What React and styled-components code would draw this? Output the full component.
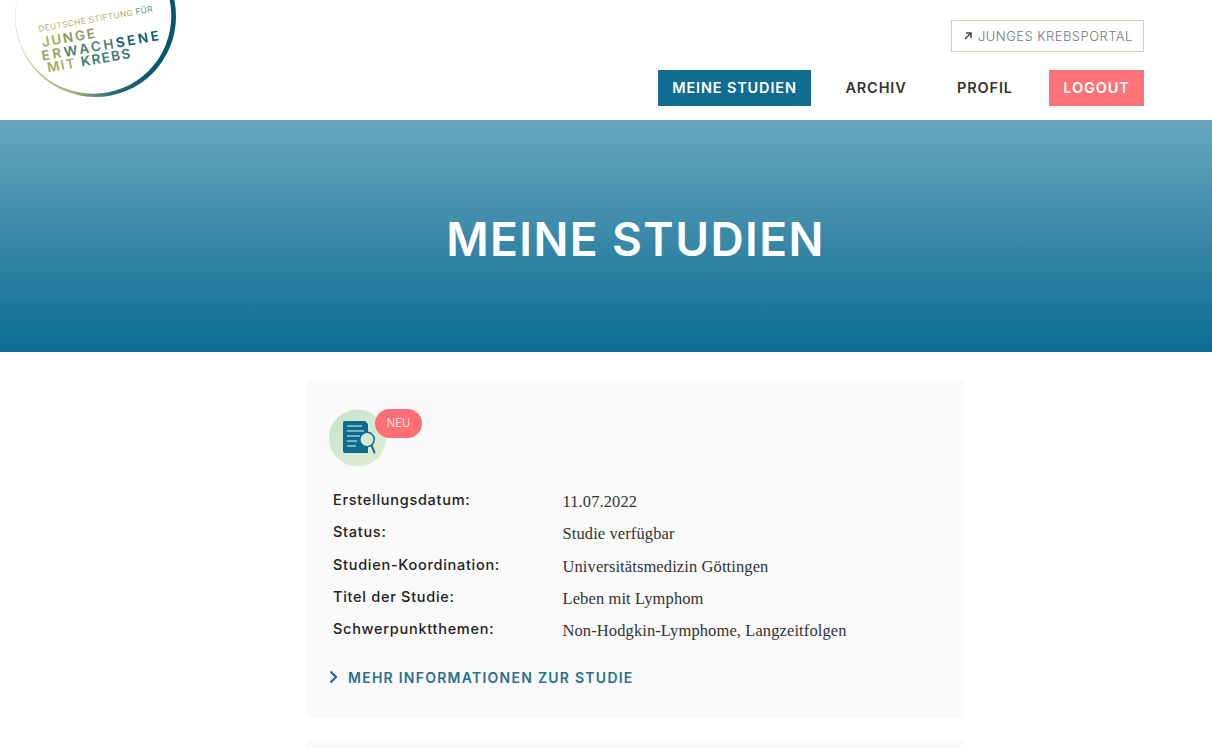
import React from "react";
import styled, { createGlobalStyle } from "styled-components";

const sans = `"Inter", "Open Sans", "Liberation Sans", sans-serif`;
const serif = `"Liberation Serif", "DejaVu Serif", serif`;

const studies = [
  ["Erstellungsdatum:", "11.07.2022"],
  ["Status:", "Studie verfügbar"],
  ["Studien-Koordination:", "Universitätsmedizin Göttingen"],
  ["Titel der Studie:", "Leben mit Lymphom"],
  ["Schwerpunktthemen:", "Non-Hodgkin-Lymphome, Langzeitfolgen"],
];

const GlobalStyle = createGlobalStyle`
  html, body {
    margin: 0;
    height: 748px;
    overflow: hidden;
    background: #fff;
  }
  * { box-sizing: border-box; }
`;

const Header = styled.header`
  height: 120px;
  display: flex;
  justify-content: space-between;
  padding: 0 68px 0 14px;
`;

const LogoWrap = styled.div`
  width: 166px;
  height: 100px;
`;

const HeaderRight = styled.div`
  display: flex;
  flex-direction: column;
  align-items: flex-end;
  padding-top: 20px;
`;

const PortalLink = styled.a`
  height: 32px;
  width: 193px;
  border: 1px solid #c9d3b8;
  display: flex;
  align-items: center;
  gap: 5px;
  padding-left: 11px;
  font: 300 13px ${sans};
  letter-spacing: 0.45px;
  color: #77797b;
  white-space: nowrap;
`;

const Nav = styled.nav`
  display: flex;
  margin-top: 18px;
`;

const NavItem = styled.a`
  height: 36px;
  width: ${(p) => p.$w}px;
  margin-left: ${(p) => p.$ml}px;
  padding-bottom: 2px;
  display: flex;
  align-items: center;
  justify-content: center;
  font: 600 14.5px ${sans};
  letter-spacing: 0.85px;
  white-space: nowrap;
  color: ${(p) => (p.$bg ? "#fff" : "#333")};
  background: ${(p) => p.$bg || "transparent"};
`;

const Hero = styled.section`
  height: 232px;
  background: linear-gradient(180deg, #68a6c0 0%, #0c6c91 100%);
  display: flex;
  align-items: center;
  justify-content: center;
  padding: 6px 0 0 59px;
`;

const HeroTitle = styled.h1`
  margin: 0;
  font: 600 46px ${sans};
  letter-spacing: 1.4px;
  color: #fff;
  white-space: nowrap;
`;

const Main = styled.main`
  width: 657px;
  margin: 28px 0 0 307px;
  display: flex;
  flex-direction: column;
  gap: 22px;
`;

const Card = styled.article`
  background: #fafafa;
  height: ${(p) => p.$h}px;
  padding: 29px 22px 0;
`;

const IconWrap = styled.div`
  position: relative;
  width: 58px;
  height: 58px;
`;

const Badge = styled.span`
  position: absolute;
  left: 46px;
  top: 0;
  width: 47px;
  height: 29px;
  border-radius: 15px;
  background: #fd6f74;
  color: #fff;
  display: flex;
  align-items: center;
  justify-content: center;
  padding-bottom: 1px;
  font: 300 11px ${sans};
  letter-spacing: 0.2px;
`;

const Rows = styled.dl`
  margin: 17px 0 0 4px;
  display: grid;
  grid-template-columns: 229.5px 1fr;
  grid-auto-rows: 32.3px;
`;

const Label = styled.dt`
  font: 500 14.5px/32px ${sans};
  letter-spacing: 0.72px;
  color: #222;
  white-space: nowrap;
`;

const Value = styled.dd`
  margin: 0;
  padding-top: 2px;
  font: 400 16.5px/32px ${serif};
  letter-spacing: 0.1px;
  color: #333;
  white-space: nowrap;
`;

const MoreLink = styled.a`
  margin-top: 20px;
  height: 24px;
  display: flex;
  align-items: center;
  gap: 10px;
  font: 600 14px ${sans};
  letter-spacing: 1.25px;
  color: #2a6f8e;
  white-space: nowrap;
`;

function Logo() {
  return (
    <svg width="166" height="100" viewBox="0 0 166 100">
      <defs>
        <linearGradient id="ring" gradientUnits="userSpaceOnUse" x1="8" y1="50" x2="135" y2="70">
          <stop offset="0" stopColor="#ccd19c" />
          <stop offset="0.45" stopColor="#a3b07c" />
          <stop offset="0.75" stopColor="#2f6c70" />
          <stop offset="1" stopColor="#07566f" />
        </linearGradient>
      </defs>
      <path
        fillRule="evenodd"
        fill="url(#ring)"
        d="M1 16.5 A80.5 80.5 0 1 0 162 16.5 A80.5 80.5 0 1 0 1 16.5 Z M1.3 15.8 A78 78 0 1 0 157.3 15.8 A78 78 0 1 0 1.3 15.8 Z"
      />
      <g transform="rotate(-10 29 48)" fontFamily={sans}>
        <text x="27.8" y="31.5" fontSize="8.4" letterSpacing="0.35" fill="#a9b06f">DEUTSCHE STIFTUNG <tspan fill="#5f8f7c">FÜR</tspan></text>
        <text x="29" y="47" fontSize="13.5" fontWeight="600" letterSpacing="1.8" fill="#a5ac58">JU<tspan fill="#8a9a58">NGE</tspan></text>
        <text x="26.4" y="60.5" fontSize="13.5" fontWeight="600" letterSpacing="2.7" fill="#97a35c">ER<tspan fill="#4b8273">WACH</tspan><tspan fill="#0c5b72">SENE</tspan></text>
        <text x="29.6" y="73" fontSize="13.5" fontWeight="600" letterSpacing="1.45" fill="#a9ae63">MIT <tspan fill="#3c7a70">KREBS</tspan></text>
      </g>
    </svg>
  );
}

function StudyIcon() {
  return (
    <svg width="58" height="58" viewBox="0 0 58 58">
      <defs>
        <linearGradient id="disc" x1="0" y1="0" x2="1" y2="1">
          <stop offset="0" stopColor="#c8e2cb" />
          <stop offset="1" stopColor="#deefd6" />
        </linearGradient>
      </defs>
      <circle cx="28.5" cy="29" r="28.5" fill="url(#disc)" />
      <path d="M16 12 H36 L39 15 V44 H16 A2 2 0 0 1 14 42 V14 A2 2 0 0 1 16 12 Z" fill="#0f6b8d" />
      <g stroke="#b7dcdc" strokeWidth="1.3">
        <path d="M18 17 H33" />
        <path d="M18 22 H35" />
        <path d="M18 27 H31" />
        <path d="M18 32 H28" />
        <path d="M18 37 H27" />
      </g>
      <circle cx="38" cy="30.5" r="7.2" fill="#d4ecd6" stroke="#0f6b8d" strokeWidth="1.5" />
      <path d="M42.5 36.5 L45.5 43.5" stroke="#0f6b8d" strokeWidth="2" strokeLinecap="round" />
    </svg>
  );
}

export default function App() {
  return (
    <>
      <GlobalStyle />
      <Header>
        <LogoWrap>
          <Logo />
        </LogoWrap>
        <HeaderRight>
          <PortalLink>
            <svg width="10" height="10" viewBox="0 0 10 10" fill="none" stroke="#444" strokeWidth="1.5">
              <path d="M2 8 L8 2 M3 2 H8 V7" />
            </svg>
            JUNGES KREBSPORTAL
          </PortalLink>
          <Nav>
            <NavItem $w={153} $ml={0} $bg="#0f6d90">MEINE STUDIEN</NavItem>
            <NavItem $w={96} $ml={17}>ARCHIV</NavItem>
            <NavItem $w={94} $ml={14}>PROFIL</NavItem>
            <NavItem $w={95} $ml={17} $bg="#fe7377">LOGOUT</NavItem>
          </Nav>
        </HeaderRight>
      </Header>
      <Hero>
        <HeroTitle>MEINE STUDIEN</HeroTitle>
      </Hero>
      <Main>
        <Card $h={338}>
          <IconWrap>
            <StudyIcon />
            <Badge>NEU</Badge>
          </IconWrap>
          <Rows>
            {studies.map(([label, value]) => (
              <React.Fragment key={label}>
                <Label>{label}</Label>
                <Value>{value}</Value>
              </React.Fragment>
            ))}
          </Rows>
          <MoreLink>
            <svg width="9" height="14" viewBox="0 0 9 14" fill="none" stroke="#1f6c8c" strokeWidth="2.2">
              <path d="M1.5 1.5 L7 7 L1.5 12.5" />
            </svg>
            MEHR INFORMATIONEN ZUR STUDIE
          </MoreLink>
        </Card>
        <Card $h={8} />
      </Main>
    </>
  );
}
